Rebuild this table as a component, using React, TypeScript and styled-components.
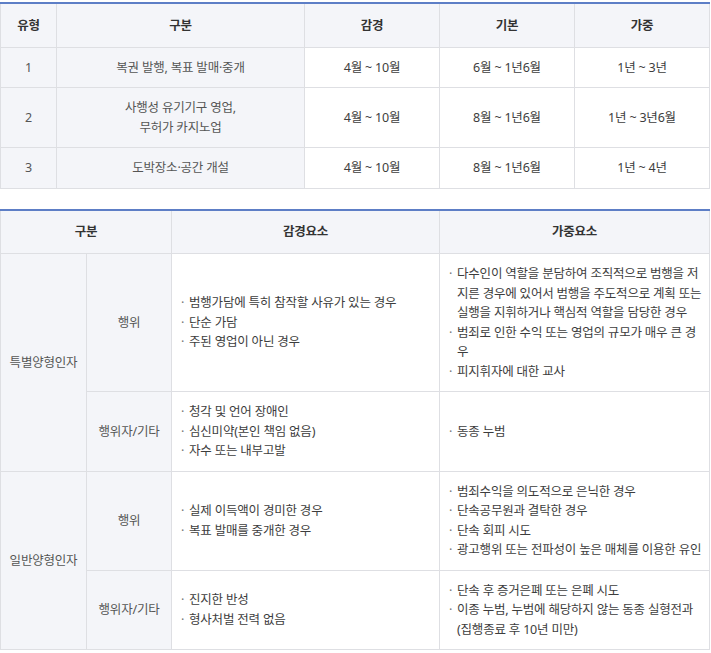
import React from 'react';
import styled, { createGlobalStyle } from 'styled-components';

const GlobalStyle = createGlobalStyle`
	html, body {
		margin: 0;
		padding: 0;
		background: #fff;
	}
	body {
		font-family: "Noto Sans", "Noto Sans CJK KR", sans-serif;
		font-size: 12.5px;
		color: #444;
	}
`;

const Page = styled.div`
	width: 710px;
	padding-top: 2px;
	display: flex;
	flex-direction: column;
	gap: 20px;
`;

const Table = styled.table`
	width: 100%;
	border-collapse: collapse;
	table-layout: fixed;
	border-top: 2px solid #5d7ec6;
	font-family: "Noto Sans", "Noto Sans CJK KR", sans-serif;
	font-size: 12.5px;
	line-height: 19.5px;
	letter-spacing: -0.2px;
`;

const Th = styled.th`
	padding: 11.5px 6px;
	background-color: #f4f5f9;
	border: 1px solid #dedfe3;
	border-top: none;
	color: #333;
	font-weight: 700;
	text-align: center;
	vertical-align: middle;
`;

const Td = styled.td<{ $label?: boolean; $align?: 'left' | 'center' }>`
	padding: ${props => props.$align === 'left' ? '10px 7px 10px 9px' : '10px 5px'};
	border: 1px solid #dedfe3;
	background-color: ${props => props.$label ? '#f4f5f9' : '#fff'};
	color: ${props => props.$label ? '#555' : '#3d3d3d'};
	text-align: ${props => props.$align || 'center'};
	vertical-align: middle;
`;

const BulletList = styled.ul`
	list-style: none;
	margin: 0;
	padding: 0;
`;

const Bullet = styled.li`
	position: relative;
	padding-left: 8px;

	&::before {
		content: '·';
		position: absolute;
		left: 0;
		top: 0;
		color: #777;
	}
`;

const penaltyRows = [
	{ type: '1', name: ['복권 발행, 복표 발매·중개'], reduced: '4월 ~ 10월', base: '6월 ~ 1년6월', aggravated: '1년 ~ 3년' },
	{ type: '2', name: ['사행성 유기기구 영업,', '무허가 카지노업'], reduced: '4월 ~ 10월', base: '8월 ~ 1년6월', aggravated: '1년 ~ 3년6월' },
	{ type: '3', name: ['도박장소·공간 개설'], reduced: '4월 ~ 10월', base: '8월 ~ 1년6월', aggravated: '1년 ~ 4년' },
];

const factorGroups = [
	{
		group: '특별양형인자',
		rows: [
			{
				kind: '행위',
				reduce: ['범행가담에 특히 참작할 사유가 있는 경우', '단순 가담', '주된 영업이 아닌 경우'],
				aggravate: [
					'다수인이 역할을 분담하여 조직적으로 범행을 저지른 경우에 있어서 범행을 주도적으로 계획 또는 실행을 지휘하거나 핵심적 역할을 담당한 경우',
					'범죄로 인한 수익 또는 영업의 규모가 매우 큰 경우',
					'피지휘자에 대한 교사',
				],
			},
			{
				kind: '행위자/기타',
				reduce: ['청각 및 언어 장애인', '심신미약(본인 책임 없음)', '자수 또는 내부고발'],
				aggravate: ['동종 누범'],
			},
		],
	},
	{
		group: '일반양형인자',
		rows: [
			{
				kind: '행위',
				reduce: ['실제 이득액이 경미한 경우', '복표 발매를 중개한 경우'],
				aggravate: ['범죄수익을 의도적으로 은닉한 경우', '단속공무원과 결탁한 경우', '단속 회피 시도', '광고행위 또는 전파성이 높은 매체를 이용한 유인'],
			},
			{
				kind: '행위자/기타',
				reduce: ['진지한 반성', '형사처벌 전력 없음'],
				aggravate: ['단속 후 증거은폐 또는 은폐 시도', '이종 누범, 누범에 해당하지 않는 동종 실형전과 (집행종료 후 10년 미만)'],
			},
		],
	},
];

const Bullets = ({ items }: { items: string[] }) => (
	<BulletList>
		{items.map((item, i) => <Bullet key={i}>{item}</Bullet>)}
	</BulletList>
);

const App = () => {
	return (
		<>
			<GlobalStyle />
			<Page>
				<Table>
					<colgroup>
						<col style={{ width: 56 }} />
						<col style={{ width: 248 }} />
						<col style={{ width: 135 }} />
						<col style={{ width: 135 }} />
						<col />
					</colgroup>
					<thead>
						<tr>
							<Th>유형</Th>
							<Th>구분</Th>
							<Th>감경</Th>
							<Th>기본</Th>
							<Th>가중</Th>
						</tr>
					</thead>
					<tbody>
						{penaltyRows.map(row => (
							<tr key={row.type}>
								<Td $label>{row.type}</Td>
								<Td $label>
									{row.name.map((line, i) => <div key={i}>{line}</div>)}
								</Td>
								<Td>{row.reduced}</Td>
								<Td>{row.base}</Td>
								<Td>{row.aggravated}</Td>
							</tr>
						))}
					</tbody>
				</Table>

				<Table>
					<colgroup>
						<col style={{ width: 86 }} />
						<col style={{ width: 85 }} />
						<col style={{ width: 268 }} />
						<col />
					</colgroup>
					<thead>
						<tr>
							<Th colSpan={2}>구분</Th>
							<Th>감경요소</Th>
							<Th>가중요소</Th>
						</tr>
					</thead>
					<tbody>
						{factorGroups.map(group => group.rows.map((row, i) => (
							<tr key={group.group + i}>
								{i === 0 && <Td $label rowSpan={group.rows.length}>{group.group}</Td>}
								<Td $label>{row.kind}</Td>
								<Td $align="left"><Bullets items={row.reduce} /></Td>
								<Td $align="left"><Bullets items={row.aggravate} /></Td>
							</tr>
						)))}
					</tbody>
				</Table>
			</Page>
		</>
	);
};

export default App;
